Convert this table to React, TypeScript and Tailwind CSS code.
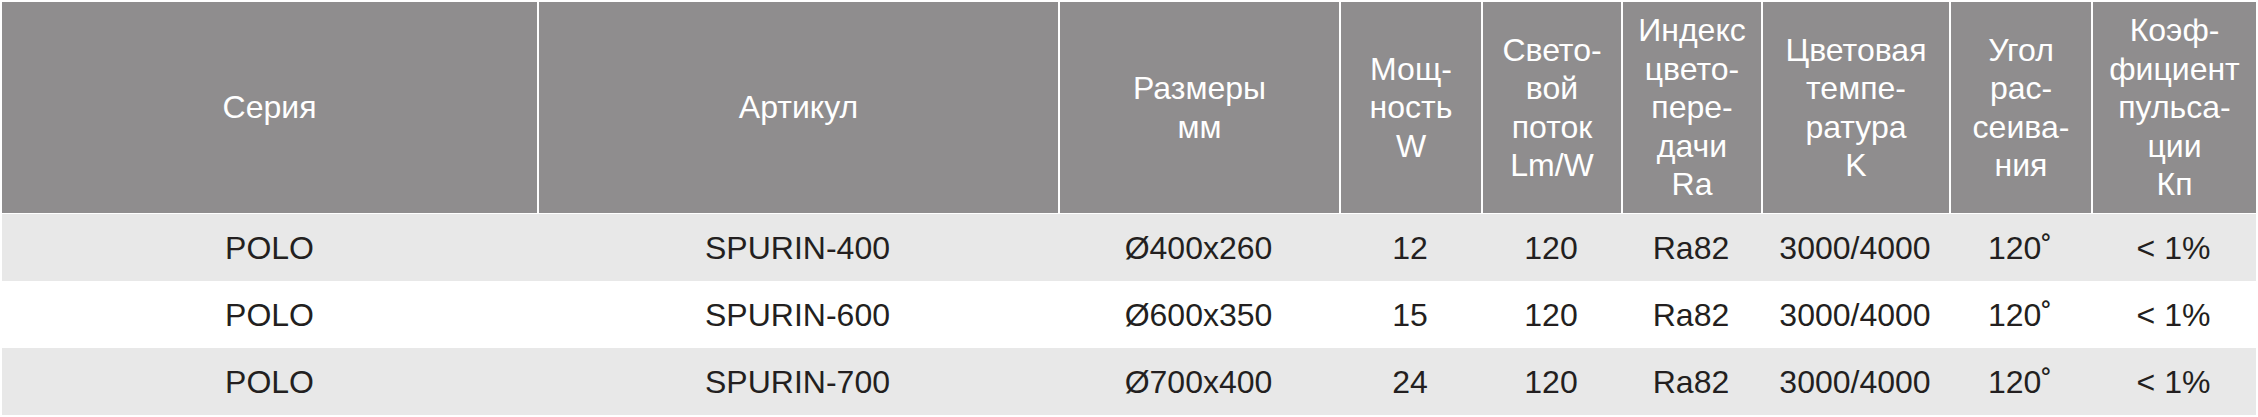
import React from "react";

const headers: string[][] = [
  ["Серия"],
  ["Артикул"],
  ["Размеры", "мм"],
  ["Мощ-", "ность", "W"],
  ["Свето-", "вой", "поток", "Lm/W"],
  ["Индекс", "цвето-", "пере-", "дачи", "Ra"],
  ["Цветовая", "темпе-", "ратура", "K"],
  ["Угол", "рас-", "сеива-", "ния"],
  ["Коэф-", "фициент", "пульса-", "ции", "Кп"],
];

const rows: string[][] = [
  ["POLO", "SPURIN-400", "Ø400x260", "12", "120", "Ra82", "3000/4000", "120˚", "< 1%"],
  ["POLO", "SPURIN-600", "Ø600x350", "15", "120", "Ra82", "3000/4000", "120˚", "< 1%"],
  ["POLO", "SPURIN-700", "Ø700x400", "24", "120", "Ra82", "3000/4000", "120˚", "< 1%"],
];

const cols =
  "grid grid-cols-[535px_521px_281px_142px_140px_140px_188px_142px_165px]";

export default function App() {
  return (
    <div
      className="w-[2258px] h-[417px] bg-white pt-[2px] pl-[2px]"
      style={{ fontFamily: '"Liberation Sans", Arial, sans-serif' }}
    >
      <div className="w-[2254px]">
        <div className={`${cols} h-[211px]`}>
          {headers.map((lines, i) => (
            <div
              key={i}
              className={`flex flex-col items-center justify-center bg-[#8f8d8e] text-white text-[32px] leading-[38.5px] ${
                i > 0 ? "border-l-2 border-white" : ""
              }`}
            >
              {lines.map((l, j) => (
                <span key={j} className="whitespace-nowrap">
                  {l}
                </span>
              ))}
            </div>
          ))}
        </div>
        <div className="mt-[1px]">
          {rows.map((r, ri) => (
            <div
              key={ri}
              className={`${cols} h-[67px] ${
                ri % 2 === 0 ? "bg-[#e8e8e8]" : "bg-white"
              }`}
            >
              {r.map((c, ci) => (
                <div
                  key={ci}
                  className="flex items-center justify-center text-[32px] text-[#231f20] whitespace-nowrap"
                >
                  {c}
                </div>
              ))}
            </div>
          ))}
        </div>
      </div>
    </div>
  );
}
